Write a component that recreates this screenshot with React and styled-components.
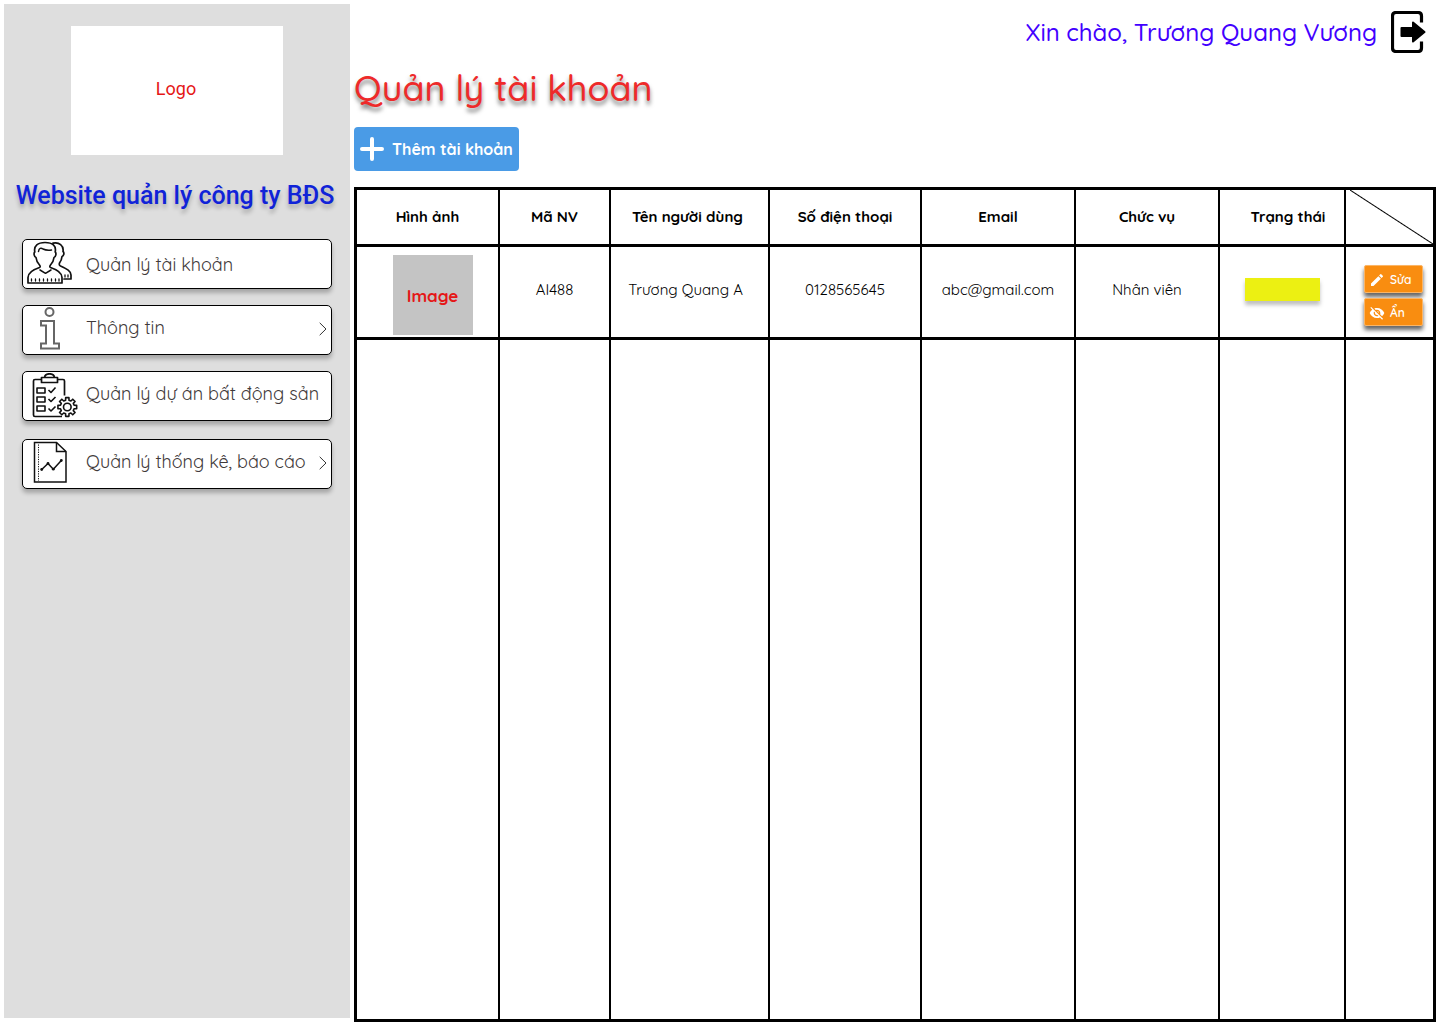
import React from 'react';
import styled, { createGlobalStyle } from 'styled-components';
import { MdEdit, MdVisibilityOff } from 'react-icons/md';

const GlobalStyle = createGlobalStyle`
  *, *::before, *::after { box-sizing: border-box; }
  body {
    margin: 0;
    background: #fff;
    color: #000;
    font-family: Quicksand, Inter, sans-serif;
  }
`;

const Page = styled.div`
  display: grid;
  grid-template-columns: 346px minmax(0, 1fr);
  gap: 4px;
  min-height: 100vh;
  padding: 4px 4px 2px;
`;

const Sidebar = styled.aside`
  display: flex;
  flex-direction: column;
  align-items: center;
  margin-bottom: 4px;
  padding: 22px 18px;
  background: #dedede;
`;

const LogoBox = styled.div`
  display: flex;
  align-items: center;
  justify-content: center;
  width: 212px;
  height: 129px;
  padding: 0 2px 4px 0;
  background: #fff;
  color: #e51717;
  font: 400 18px/20px Roboto, sans-serif;
`;

const SiteName = styled.p`
  margin: 26px 0 29px;
  padding-right: 4px;
  color: #1023d8;
  font: 500 25px/29px Roboto, sans-serif;
  white-space: nowrap;
  text-shadow: 0 4px 4px rgba(0, 0, 0, 0.25);
`;

const Menu = styled.nav`
  display: flex;
  flex-direction: column;
  gap: 16px;
  width: 100%;
`;

const MenuLink = styled.a`
  display: flex;
  align-items: center;
  gap: 7px;
  height: 50px;
  padding: 0 4px;
  border: 1px solid #000;
  border-radius: 5px;
  background: #fff;
  box-shadow: 0 4px 4px rgba(0, 0, 0, 0.25);
  color: #3f3a3a;
  font-size: 18px;
  font-weight: 400;
  line-height: 22px;
  text-decoration: none;

  &:last-child { margin-top: 2px; }
`;

const MenuLabel = styled.span`
  flex: 1;
  padding: ${(p) => (p.$raised ? '0 0 4px' : '2px 0 0')};
  white-space: nowrap;
`;

const MenuArt = styled.svg`
  flex: none;
  width: 52px;
  height: 46px;
  fill: none;
  stroke: ${(p) => p.$tone || '#111'};
  stroke-width: 2;
  stroke-linejoin: round;
`;

const Chevron = styled.svg`
  flex: none;
  width: 8px;
  height: 14px;
  margin-bottom: 3px;
  fill: none;
  stroke: #333;
`;

const Main = styled.main`
  display: flex;
  flex-direction: column;
  align-items: flex-start;
`;

const TopBar = styled.header`
  display: flex;
  align-items: center;
  align-self: flex-end;
  gap: 14px;
  padding: 7px 10px 12px 0;
`;

const Greeting = styled.span`
  color: #4200ff;
  font-size: 24px;
  font-weight: 500;
  line-height: 30px;
`;

const LogoutButton = styled.button`
  display: flex;
  padding: 0;
  border: 0;
  background: none;
  cursor: pointer;
`;

const Title = styled.h1`
  margin: 0 0 17px;
  color: #ee2a2a;
  font-size: 36px;
  font-weight: 500;
  line-height: 45px;
  text-shadow: 0 4px 4px rgba(0, 0, 0, 0.5);
`;

const AddButton = styled.button`
  display: flex;
  align-items: center;
  gap: 8px;
  height: 44px;
  margin-bottom: 16px;
  padding: 0 6px;
  border: 0;
  border-radius: 4px;
  background: #4a9be6;
  color: #fff;
  font: 700 16px/20px Quicksand, Inter, sans-serif;
  cursor: pointer;
`;

const Table = styled.table`
  flex: 1;
  width: 100%;
  table-layout: fixed;
  border: 3px solid #000;
  border-collapse: separate;
  border-spacing: 0;
  font-size: 15px;
  line-height: 18px;
  text-align: center;
`;

const Col = styled.col`
  width: ${(p) => p.$width}px;
`;

const HeadCell = styled.th`
  height: 57px;
  padding: ${(p) => p.$pad || '0'};
  border-right: 2px solid #000;
  border-bottom: 3px solid #000;
  font-weight: 700;
`;

const CornerCell = styled(HeadCell)`
  border-right: 0;
  background: linear-gradient(to top right, transparent calc(50% - 1px), #000 50%, transparent calc(50% + 1px)) right top / calc(100% - 4px) 100% no-repeat;
`;

const Cell = styled.td`
  height: 93px;
  padding: ${(p) => p.$pad || '0 0 4px'};
  border-right: 2px solid #000;
  border-bottom: 3px solid #000;
  font-weight: 400;

  &:last-child { border-right: 0; }
`;

const EmptyCell = styled(Cell)`
  height: auto;
  border-bottom: 0;
`;

const Thumb = styled.div`
  display: flex;
  align-items: center;
  justify-content: center;
  width: 80px;
  height: 80px;
  margin: 0 auto;
  padding-top: 2px;
  background: #c4c4c4;
  color: #e51717;
  font-size: 17px;
  font-weight: 700;
`;

const Status = styled.div`
  width: 75px;
  height: 23px;
  margin: 0 auto;
  background: #ecf012;
  box-shadow: 0 4px 4px rgba(0, 0, 0, 0.25);
`;

const Actions = styled.div`
  display: flex;
  flex-direction: column;
  align-items: center;
  gap: 5px;
`;

const ActionButton = styled.button`
  display: flex;
  align-items: center;
  gap: 5px;
  width: 59px;
  height: 28px;
  padding: 2px 4px 0;
  border: 1px solid #fbb566;
  border-radius: 2px;
  background: #f98d10;
  box-shadow: 0 4px 4px rgba(0, 0, 0, 0.6);
  color: #fff;
  font: 600 12px/15px Quicksand, Inter, sans-serif;
  cursor: pointer;
`;

const PeopleArt = () => (
  <MenuArt viewBox="0 0 52 46" strokeLinecap="round" aria-hidden="true">
    <path d="M1 42V36.500C1 31.500 5 29 12.500 26.500C13.500 26 13.300 25 12.500 24C10.500 22 9.300 19.500 9 16.500C7 16 6.500 12 7.800 11C6.500 4.500 11 1.500 18 1.500C25.500 1.500 29.500 4.500 28.200 11C29.500 12 29 16 27 16.500C26.700 19.500 25.500 22 23.500 24C22.700 25 22.500 26 23.500 26.500C31 29 35 31.500 35 36.500V42Z" strokeWidth="1.700" />
    <path d="M11.500 10.500C12 7 14 6.500 16 8C18 9 21 9.500 24.500 9" strokeWidth="1.500" />
    <path d="M13 29L18.500 32.300L24 29" strokeWidth="1.500" />
    <path d="M26 2.200C32 .8 37 4.500 36 10.500C37.500 11.500 37 15 35 15.500C34.800 18 34 20 32.500 22C32 23.500 32.300 24.500 33.500 25C40 28 44 30 44 34V38H37" strokeWidth="1.700" />
    <path d="M4.500 38V40M8.500 38V40M12.500 38V40M16.500 38V40M20.500 38V40M24.500 38V40M28.500 38V40M32 38V40M38 34V36M41 34V36" strokeWidth="1.300" />
  </MenuArt>
);

const InfoArt = () => (
  <MenuArt viewBox="0 0 52 46" $tone="#666" aria-hidden="true">
    <circle cx="22.500" cy="5" r="4" />
    <path d="M14 14H27V36.500H32V41.500H14V36.500H19V18.500H14Z" strokeLinejoin="miter" />
  </MenuArt>
);

const gearTeeth = Array.from({ length: 8 }, (_, i) => {
  const at = (deg, r) => {
    const a = ((i * 45 + deg) * Math.PI) / 180;
    return `${(40.3 + r * Math.cos(a)).toFixed(2)} ${(34 + r * Math.sin(a)).toFixed(2)}`;
  };
  return `${at(-14, 7)}L${at(-10, 9.5)}L${at(10, 9.5)}L${at(14, 7)}`;
}).join('L');

const ProjectArt = () => (
  <MenuArt viewBox="0 0 52 46" aria-hidden="true">
    <path d="M14 6.500H8Q6.500 6.500 6.500 8V42Q6.500 43.500 8 43.500H35" strokeWidth="1.700" />
    <path d="M31 6.500H36Q37.500 6.500 37.500 8V22.500" strokeWidth="1.700" />
    <path d="M17.500 4.500Q18 .8 22.500 .8T27.500 4.500M14.500 4.500H30.500V9.500H14.500Z" strokeWidth="1.700" />
    <path d="M10 15H18V20H10ZM10 24H18V29H10ZM10 33H18V38H10Z" strokeWidth="1.600" />
    <path d="M21.500 17L24 19.500L28.500 14.500M21.500 26L24 28.500L28.500 24M21.500 35.500L24 38L28.500 33.500" strokeWidth="1.600" />
    <path d={`M${gearTeeth}Z`} fill="#fff" strokeWidth="1.600" />
    <circle cx="40.300" cy="34" r="3.800" strokeWidth="1.600" />
  </MenuArt>
);

const ReportArt = () => (
  <MenuArt viewBox="0 0 52 46" aria-hidden="true">
    <path d="M7.500 1.500H29.500L39 10.500V41H7.500Z" strokeWidth="1.500" strokeLinejoin="miter" />
    <path d="M29.500 1.500V10.500H39" strokeWidth="1.500" strokeLinejoin="miter" />
    <path d="M11.500 3.500V40" strokeWidth="1" strokeDasharray="1.200 1.200" />
    <path d="M14.700 28.500L21 22.500L26.300 28.200L34.300 19.500" strokeWidth="1.500" />
    <g fill="#111" stroke="none">
      <circle cx="14.700" cy="28.500" r="1.400" />
      <circle cx="21" cy="22.500" r="1.400" />
      <circle cx="26.300" cy="28.200" r="1.400" />
      <circle cx="34.300" cy="19.500" r="1.400" />
    </g>
  </MenuArt>
);

const MENU = [
  { label: 'Quản lý tài khoản', Art: PeopleArt },
  { label: 'Thông tin', Art: InfoArt, raised: true, more: true },
  { label: 'Quản lý dự án bất động sản', Art: ProjectArt, raised: true },
  { label: 'Quản lý thống kê, báo cáo', Art: ReportArt, raised: true, more: true },
];

const COLUMNS = [143, 111, 159, 152, 154, 144, 126, 87];

export default function App() {
  return (
    <>
      <GlobalStyle />
      <Page>
        <Sidebar>
          <LogoBox>Logo</LogoBox>
          <SiteName>Website quản lý công ty BĐS</SiteName>
          <Menu>
            {MENU.map(({ label, Art, raised, more }) => (
              <MenuLink href="#" key={label}>
                <Art />
                <MenuLabel $raised={raised}>{label}</MenuLabel>
                {more && (
                  <Chevron viewBox="0 0 8 14" aria-hidden="true">
                    <path d="M.7 .8L7 7L.7 13.200" />
                  </Chevron>
                )}
              </MenuLink>
            ))}
          </Menu>
        </Sidebar>
        <Main>
          <TopBar>
            <Greeting>Xin chào, Trương Quang Vương</Greeting>
            <LogoutButton type="button" aria-label="Đăng xuất">
              <svg width="35" height="42" viewBox="0 0 35 42" fill="none">
                <path d="M30.500 11.500V5Q30.500 1.500 27 1.500H5Q1.500 1.500 1.500 5V37Q1.500 40.500 5 40.500H27Q30.500 40.500 30.500 37V30.500" stroke="#000" strokeWidth="3.200" />
                <path d="M10.500 17H22V11.500L33.500 21L22 30.500V25H10.500Z" fill="#000" stroke="#000" strokeWidth="2" strokeLinejoin="round" />
              </svg>
            </LogoutButton>
          </TopBar>
          <Title>Quản lý tài khoản</Title>
          <AddButton type="button">
            <svg width="24" height="24" viewBox="0 0 24 24" stroke="#fff" strokeWidth="4" strokeLinecap="round" aria-hidden="true">
              <path d="M12 2V22M2 12H22" />
            </svg>
            Thêm tài khoản
          </AddButton>
          <Table>
            <colgroup>
              {COLUMNS.map((width, i) => <Col key={i} $width={width} />)}
            </colgroup>
            <thead>
              <tr>
                <HeadCell>Hình ảnh</HeadCell>
                <HeadCell>Mã NV</HeadCell>
                <HeadCell $pad="0 4px 0 0">Tên người dùng</HeadCell>
                <HeadCell>Số điện thoại</HeadCell>
                <HeadCell>Email</HeadCell>
                <HeadCell>Chức vụ</HeadCell>
                <HeadCell $pad="0 0 0 12px">Trạng thái</HeadCell>
                <CornerCell as="td" />
              </tr>
            </thead>
            <tbody>
              <tr>
                <Cell $pad="8px 0 2px 10px"><Thumb>Image</Thumb></Cell>
                <Cell>AI488</Cell>
                <Cell $pad="0 8px 4px 0">Trương Quang A</Cell>
                <Cell>0128565645</Cell>
                <Cell>abc@gmail.com</Cell>
                <Cell>Nhân viên</Cell>
                <Cell $pad="0 0 6px"><Status /></Cell>
                <Cell $pad="14px 0 8px 8px">
                  <Actions>
                    <ActionButton type="button"><MdEdit size={16} />Sửa</ActionButton>
                    <ActionButton type="button"><MdVisibilityOff size={16} />Ẩn</ActionButton>
                  </Actions>
                </Cell>
              </tr>
              <tr>
                {COLUMNS.map((_, i) => <EmptyCell key={i} />)}
              </tr>
            </tbody>
          </Table>
        </Main>
      </Page>
    </>
  );
}
